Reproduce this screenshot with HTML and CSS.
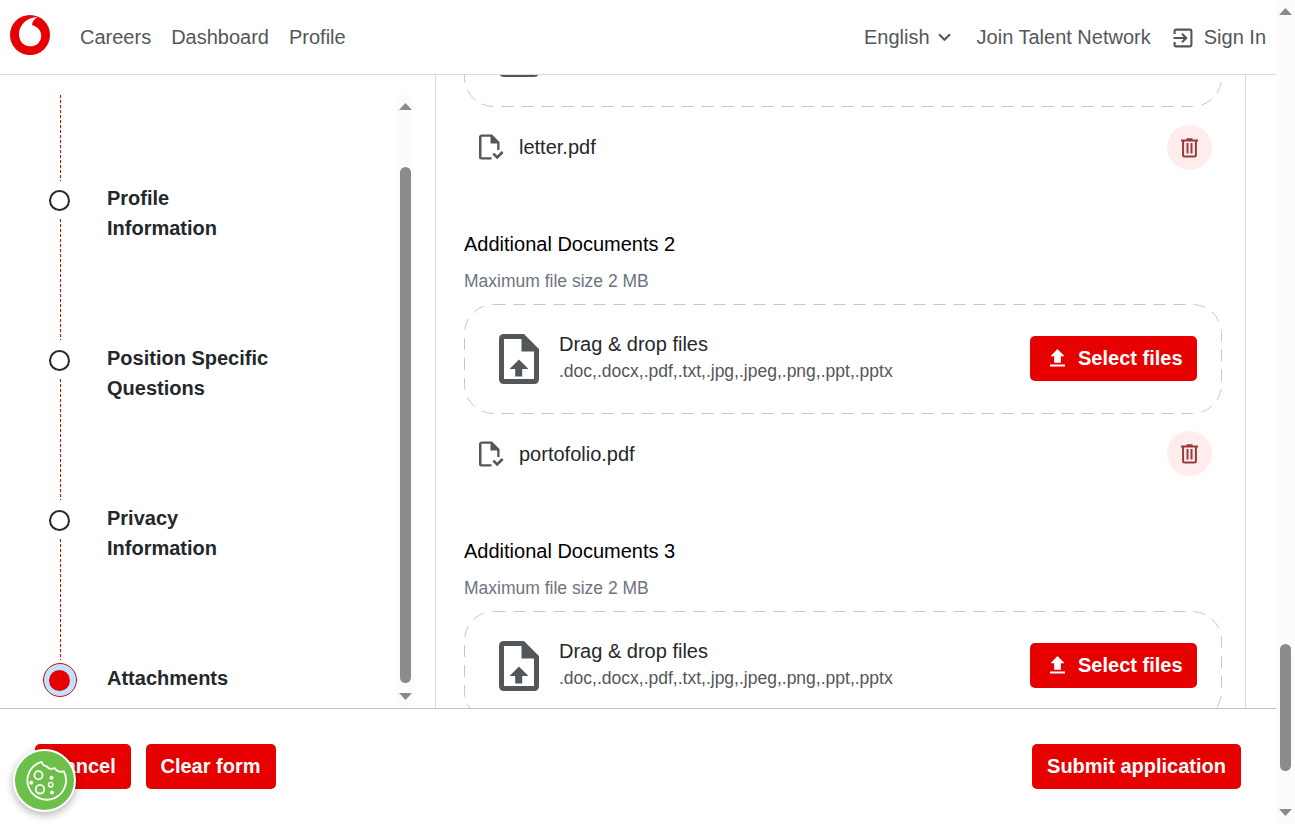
FILE: index.html
```html
<!DOCTYPE html>
<html lang="en">
<head>
<meta charset="utf-8">
<title>Careers</title>
<link rel="stylesheet" href="styles.css">
</head>
<body>
<svg class="defs" aria-hidden="true">
  <symbol id="upload-file" viewBox="0 0 40 50"><path fill="currentColor" fill-rule="evenodd" d="M5 0H25L40 15V45Q40 50 35 50H5Q0 50 0 45V5Q0 0 5 0ZM5 5V45H35V17.5H22.5V5ZM20 25.5L29.5 35H23.2V42.5H16.2V35H10.5Z"/></symbol>
  <symbol id="file-check" viewBox="0 0 25 26"><path fill="currentColor" fill-rule="evenodd" d="M3 .5H13L20.5 8V16H18.2V9.5H11.5V2.8H2.5V23.2H12.5V25.5H2.5Q0 25.5 0 23V3Q0 .5 3 .5Z"/><path fill="none" stroke="currentColor" stroke-width="2.6" d="M14.3 19.6L18.2 23.5L23.6 18"/></symbol>
  <symbol id="trash" viewBox="0 0 17 20"><path fill="none" stroke="currentColor" stroke-width="2" d="M0 2.5H17M5.5 1.2H11.5M2.1 3V17Q2.1 18.5 3.6 18.5H13.4Q14.9 18.5 14.9 17V3"/><path fill="none" stroke="currentColor" stroke-width="2" d="M6.5 5V15.5M10.5 5V15.5"/></symbol>
  <symbol id="upload" viewBox="0 0 15 18"><path fill="currentColor" d="M7.5 0L14.5 7.3H10.9V13.7H4.1V7.3H.5ZM0 15.6H15V17.6H0Z"/></symbol>
</svg>
<div class="page">
  <div class="app">
    <header class="header">
      <svg class="logo" viewBox="0 0 40 40"><circle cx="20" cy="20" r="20" fill="#e60000"/><path fill="#fff" d="M20.2 31.3C13.8 31.3 9 26.2 9 19.2C9 10.5 16.5 2.2 27.8 2.1C24.5 3.8 22 6.8 22.2 10.2C27.5 11.4 31.2 15.4 31.2 20.7C31.2 27 26.5 31.3 20.2 31.3Z"/></svg>
      <nav class="nav"><a>Careers</a><a>Dashboard</a><a>Profile</a></nav>
      <div class="account">
        <a class="language">English <svg width="13" height="9" viewBox="0 0 13 9"><path fill="none" stroke="currentColor" stroke-width="2.1" d="M1 1.3L6.5 6.8L12 1.3"/></svg></a>
        <a class="join">Join Talent Network</a>
        <a class="signin"><svg width="20" height="20" viewBox="0 0 20 20"><path fill="none" stroke="currentColor" stroke-width="2.1" d="M1.6 6V3Q1.6 1.6 3 1.6H17Q18.4 1.6 18.4 3V17Q18.4 18.4 17 18.4H3Q1.6 18.4 1.6 17V14M.5 10H13M9 5.8L13.2 10L9 14.2"/></svg>Sign In</a>
      </div>
    </header>
    <div class="content">
      <aside class="sidebar">
        <ol class="steps">
          <li class="step"><span class="dot"></span><span>Profile Information</span></li>
          <li class="step"><span class="dot"></span><span>Position Specific Questions</span></li>
          <li class="step"><span class="dot"></span><span>Privacy Information</span></li>
          <li class="step current"><span class="dot"></span><span>Attachments</span></li>
        </ol>
        <div class="scrollbar inner"><svg class="arrow" viewBox="0 0 13 7"><path d="M0 7L6.5 0L13 7Z"/></svg><span class="thumb"></span><svg class="arrow" viewBox="0 0 13 7"><path d="M0 0H13L6.5 7Z"/></svg></div>
      </aside>
      <main class="panel">
        <div class="scrolled">
          <section class="group partial">
            <div class="dropzone"><svg class="outline"><rect class="dash" x=".5" y=".5" width="757" height="109" rx="29"/></svg><svg class="upload-icon"><use href="#upload-file"/></svg></div>
            <div class="file"><svg class="file-icon"><use href="#file-check"/></svg><span>letter.pdf</span><button class="delete"><svg><use href="#trash"/></svg></button></div>
          </section>
          <section class="group">
            <h2>Additional Documents 2</h2><p class="limit">Maximum file size 2 MB</p>
            <div class="dropzone"><svg class="outline"><rect class="dash" x=".5" y=".5" width="757" height="109" rx="29"/></svg><svg class="upload-icon"><use href="#upload-file"/></svg><div class="hint"><p>Drag &amp; drop files</p><p class="types">.doc,.docx,.pdf,.txt,.jpg,.jpeg,.png,.ppt,.pptx</p></div><button class="button select"><svg><use href="#upload"/></svg>Select files</button></div>
            <div class="file"><svg class="file-icon"><use href="#file-check"/></svg><span>portofolio.pdf</span><button class="delete"><svg><use href="#trash"/></svg></button></div>
          </section>
          <section class="group">
            <h2>Additional Documents 3</h2><p class="limit">Maximum file size 2 MB</p>
            <div class="dropzone"><svg class="outline"><rect class="dash" x=".5" y=".5" width="757" height="109" rx="29"/></svg><svg class="upload-icon"><use href="#upload-file"/></svg><div class="hint"><p>Drag &amp; drop files</p><p class="types">.doc,.docx,.pdf,.txt,.jpg,.jpeg,.png,.ppt,.pptx</p></div><button class="button select"><svg><use href="#upload"/></svg>Select files</button></div>
          </section>
        </div>
      </main>
    </div>
    <footer class="footer">
      <button class="button cancel">Cancel</button>
      <button class="button clear">Clear form</button>
      <button class="button submit">Submit application</button>
    </footer>
  </div>
  <div class="scrollbar outer"><svg class="arrow" viewBox="0 0 13 7"><path d="M0 7L6.5 0L13 7Z"/></svg><span class="thumb"></span><svg class="arrow" viewBox="0 0 13 7"><path d="M0 0H13L6.5 7Z"/></svg></div>
  <div class="cookie"><svg width="44" height="42" viewBox="0 0 44 42" fill="none" stroke="#fff" stroke-width="1.8"><path d="M18.5 1.8A19.3 19.3 0 1 0 40.8 11.4C37.5 12.2 34 11.5 31.8 8.2C28.3 9.3 25.3 8.8 24.3 6.6C21 6.3 19.5 4.8 18.5 1.8Z"/><circle cx="15.5" cy="15.3" r="4.1"/><circle cx="17" cy="29.2" r="4.3"/><circle cx="27.7" cy="24.8" r="2.2" stroke-width="1.5"/><g fill="#fff" stroke="none"><circle cx="28.5" cy="17.8" r="2"/><circle cx="8.3" cy="22.7" r="2"/><circle cx="29" cy="32.5" r="2"/></g></svg></div>
</div>
</body>
</html>
```

FILE: styles.css
```css
* { box-sizing: border-box; }
body { margin: 0; background: #fff; color: #25282b; font: 20px/30px "Liberation Sans", Arial, sans-serif; overflow: hidden; }
h2, p, ol { margin: 0; padding: 0; font-weight: 400; font-size: 20px; list-style: none; }
.defs { position: absolute; width: 0; height: 0; }
.page { display: flex; width: 1295px; height: 824px; }
.app { display: flex; flex: none; flex-direction: column; width: 1276px; }

.header { display: flex; flex: none; align-items: center; height: 75px; border-bottom: 1px solid #d9dadd; color: #53575a; padding: 0 10px 0 10px; }
.logo { width: 40px; height: 40px; margin-top: -4px; }
.nav { display: flex; gap: 20px; margin-left: 30px; }
.account { display: flex; margin-left: auto; }
.account a { display: flex; align-items: center; }
.language { gap: 8px; margin-right: 26px; }
.join { margin-right: 22px; }
.signin { gap: 11px; }
.signin svg { margin-top: 1px; }

.content { display: flex; height: 633px; overflow: hidden; }
.sidebar { display: flex; justify-content: space-between; width: 414px; padding-top: 20px; }
.steps { width: 280px; }
.step { position: relative; display: flex; height: 160px; padding: 88px 0 0 107px; font-weight: 700; }
.step::before { content: ""; position: absolute; left: 60px; top: -36px; height: 121px; width: 1px; background: repeating-linear-gradient(#e60000 0 3px, #fbd0d0 3px 4px, #fff 4px 5px); }
.step:first-child::before { top: 0; height: 86px; }
.dot { position: absolute; left: 49px; top: 95px; width: 21px; height: 21px; border: 2px solid #25282b; border-radius: 50%; }
.current .dot { background: #e60000; border-color: #e60000; }
.current .dot::after { content: ""; position: absolute; z-index: -1; left: -8px; top: -9px; width: 32px; height: 32px; border: 1px solid #e60000; border-radius: 50%; background: #bde3ff; }

.scrollbar { display: flex; flex-direction: column; align-items: center; background: #fcfcfc; }
.arrow { width: 13px; height: 7px; fill: #8b8b8b; }
.thumb { width: 11px; border-radius: 6px; background: #8b8b8b; }
.inner { width: 18px; padding-top: 8px; }
.inner .thumb { height: 516px; margin: 57px 0 10px; }
.outer { width: 19px; padding-top: 8px; }
.outer .thumb { height: 127px; margin: 629px 0 38px; }

.panel { width: 811px; margin-left: 21px; border: 1px solid #d9dadd; border-width: 0 1px; padding: 0 23px 0 28px; overflow: hidden; }
.scrolled { margin-top: -88px; }
.group { height: 307px; }
.partial { height: 232px; }
.group h2 { color: #000; }
.limit { font-size: 17.5px; line-height: 26px; margin-top: 9px; color: #6d7480; }
.dropzone { position: relative; display: flex; align-items: center; width: 758px; height: 110px; margin-top: 10px; padding: 0 25px 0 35px; }
.outline { position: absolute; inset: 0; width: 758px; height: 110px; }
.dash { fill: none; stroke: #c3c7cf; stroke-dasharray: 12 8; }
.upload-icon { width: 40px; height: 50px; color: #53575a; }
.hint { margin: -2px 0 0 20px; }
.hint p { height: 27px; line-height: 27px; }
.hint .types { font-size: 17.5px; color: #53575a; }
.button { height: 45px; border: 0; border-radius: 5px; padding: 0 0 2px; background: #e60000; color: #fff; font: 700 20px/30px "Liberation Sans", Arial, sans-serif; }
.select { display: flex; align-items: center; width: 167px; margin: -2px 0 0 auto; padding: 0 0 0 20px; }
.select svg { width: 15px; height: 18px; margin: 0 13px 0 0; }
.file { display: flex; align-items: center; height: 80px; padding: 0 10px 0 15px; }
.file-icon { width: 25px; height: 26px; margin-right: 15px; color: #53575a; }
.delete { display: flex; align-items: center; justify-content: center; width: 45px; height: 45px; margin: -1px 0 0 auto; border: 0; border-radius: 50%; padding: 0; background: #ffeded; color: #99383a; }
.partial .delete { margin-top: 1px; }
.delete svg { width: 17px; height: 20px; }

.footer { display: flex; flex: none; height: 116px; padding: 35px 35px 0; border-top: 1px solid #bec3cc; }
.cancel { width: 96px; }
.clear { width: 130px; margin-left: 15px; padding-right: 1px; }
.submit { width: 209px; margin-left: auto; }
.cookie { position: fixed; left: 13px; top: 749px; display: flex; align-items: center; justify-content: center; width: 63px; height: 63px; border: 2px solid #fff; border-radius: 50%; background: #6cc04a; box-shadow: 0 3px 9px rgba(0, 0, 0, .3); }
```
